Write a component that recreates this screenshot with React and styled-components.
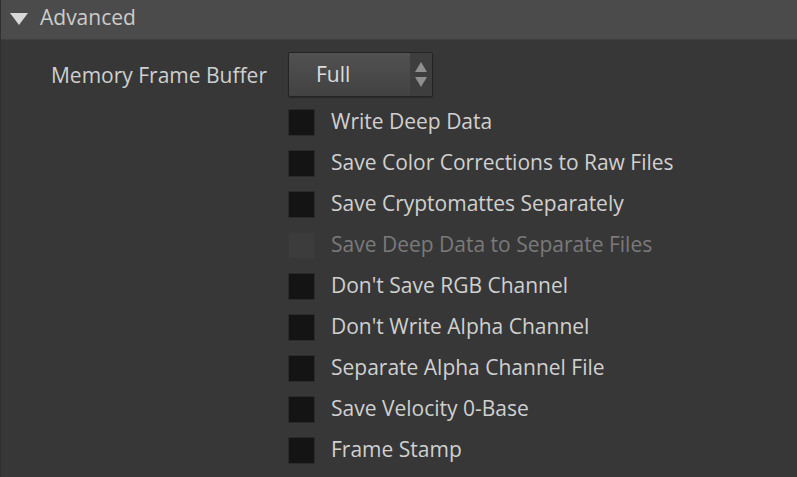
import styled, { createGlobalStyle } from 'styled-components';

const GlobalStyle = createGlobalStyle`
  html, body {
    margin: 0;
    padding: 0;
    background: #373737;
  }
  body {
    font-family: 'Open Sans', 'Noto Sans', sans-serif;
    color: #d0d0d0;
    overflow: hidden;
  }
`;

const options = [
  { label: 'Write Deep Data' },
  { label: 'Save Color Corrections to Raw Files' },
  { label: 'Save Cryptomattes Separately' },
  { label: 'Save Deep Data to Separate Files', disabled: true },
  { label: "Don't Save RGB Channel" },
  { label: "Don't Write Alpha Channel" },
  { label: 'Separate Alpha Channel File' },
  { label: 'Save Velocity 0-Base' },
  { label: 'Frame Stamp' },
];

export default function App() {
  return (
    <>
      <GlobalStyle />
      <Frame>
        <Header>
          <Triangle viewBox="0 0 18 12">
            <polygon points="0,0 18,0 9,12" fill="#d8d8d8" />
          </Triangle>
          <HeaderTitle>Advanced</HeaderTitle>
        </Header>
        <Body>
          <FieldRow>
            <FieldLabel>Memory Frame Buffer</FieldLabel>
            <Dropdown>
              <DropdownValue>Full</DropdownValue>
              <Spinner>
                <svg width="12" height="26" viewBox="0 0 12 26">
                  <polygon points="6,0 12,10 0,10" fill="#8f8f8f" />
                  <polygon points="0,15 12,15 6,25" fill="#8f8f8f" />
                </svg>
              </Spinner>
            </Dropdown>
          </FieldRow>
          <CheckList>
            {options.map((opt) => (
              <CheckRow key={opt.label}>
                <Box $disabled={opt.disabled} />
                <CheckLabel $disabled={opt.disabled}>{opt.label}</CheckLabel>
              </CheckRow>
            ))}
          </CheckList>
        </Body>
      </Frame>
    </>
  );
}

const Frame = styled.div`
  width: 797px;
  height: 477px;
  display: flex;
  flex-direction: column;
  border-left: 1px solid #2f2f2f;
  box-sizing: border-box;
`;

const Header = styled.div`
  height: 40px;
  background: #4b4b4b;
  display: flex;
  align-items: center;
  padding-left: 9px;
  gap: 12px;
  border-bottom: 1px solid #404040;
  box-sizing: border-box;
`;

const Triangle = styled.svg`
  width: 18px;
  height: 12px;
  margin-top: -2px;
`;

const HeaderTitle = styled.span`
  font-size: 21px;
  color: #cccccc;
  margin-top: -5px;
`;

const Body = styled.div`
  flex: 1;
  background: #373737;
  padding-top: 12px;
`;

const FieldRow = styled.div`
  display: flex;
  align-items: center;
  height: 45px;
`;

const FieldLabel = styled.div`
  width: 287px;
  flex-shrink: 0;
  text-align: right;
  padding-right: 21px;
  box-sizing: border-box;
  font-size: 21px;
  color: #cfcfcf;
  margin-top: 0;
  white-space: nowrap;
`;

const Dropdown = styled.div`
  width: 145px;
  height: 45px;
  box-sizing: border-box;
  display: flex;
  border: 1px solid #242424;
  border-radius: 2px;
  background: linear-gradient(#515151, #424242);
  box-shadow: 0 1px 1px #2a2a2a;
  overflow: hidden;
`;

const DropdownValue = styled.div`
  flex: 1;
  display: flex;
  align-items: center;
  padding-left: 27px;
  font-size: 21px;
  color: #dcdcdc;
  margin-top: -1px;
`;

const Spinner = styled.div`
  width: 22px;
  display: flex;
  align-items: center;
  justify-content: center;
  background: #3e3e3e;
`;

const CheckList = styled.div`
  display: flex;
  flex-direction: column;
  padding-left: 287px;
  padding-top: 5px;
`;

const CheckRow = styled.div`
  display: flex;
  align-items: center;
  height: 41px;
  gap: 16px;
`;

const Box = styled.div`
  width: 27px;
  height: 27px;
  box-sizing: border-box;
  border: 1px solid ${(p) => (p.$disabled ? '#383838' : '#2b2b2b')};
  background: ${(p) => (p.$disabled ? '#3c3c3c' : '#141414')};
`;

const CheckLabel = styled.span`
  font-size: 21px;
  color: ${(p) => (p.$disabled ? '#7a7a7a' : '#d0d0d0')};
  margin-top: -3px;
  white-space: nowrap;
`;
